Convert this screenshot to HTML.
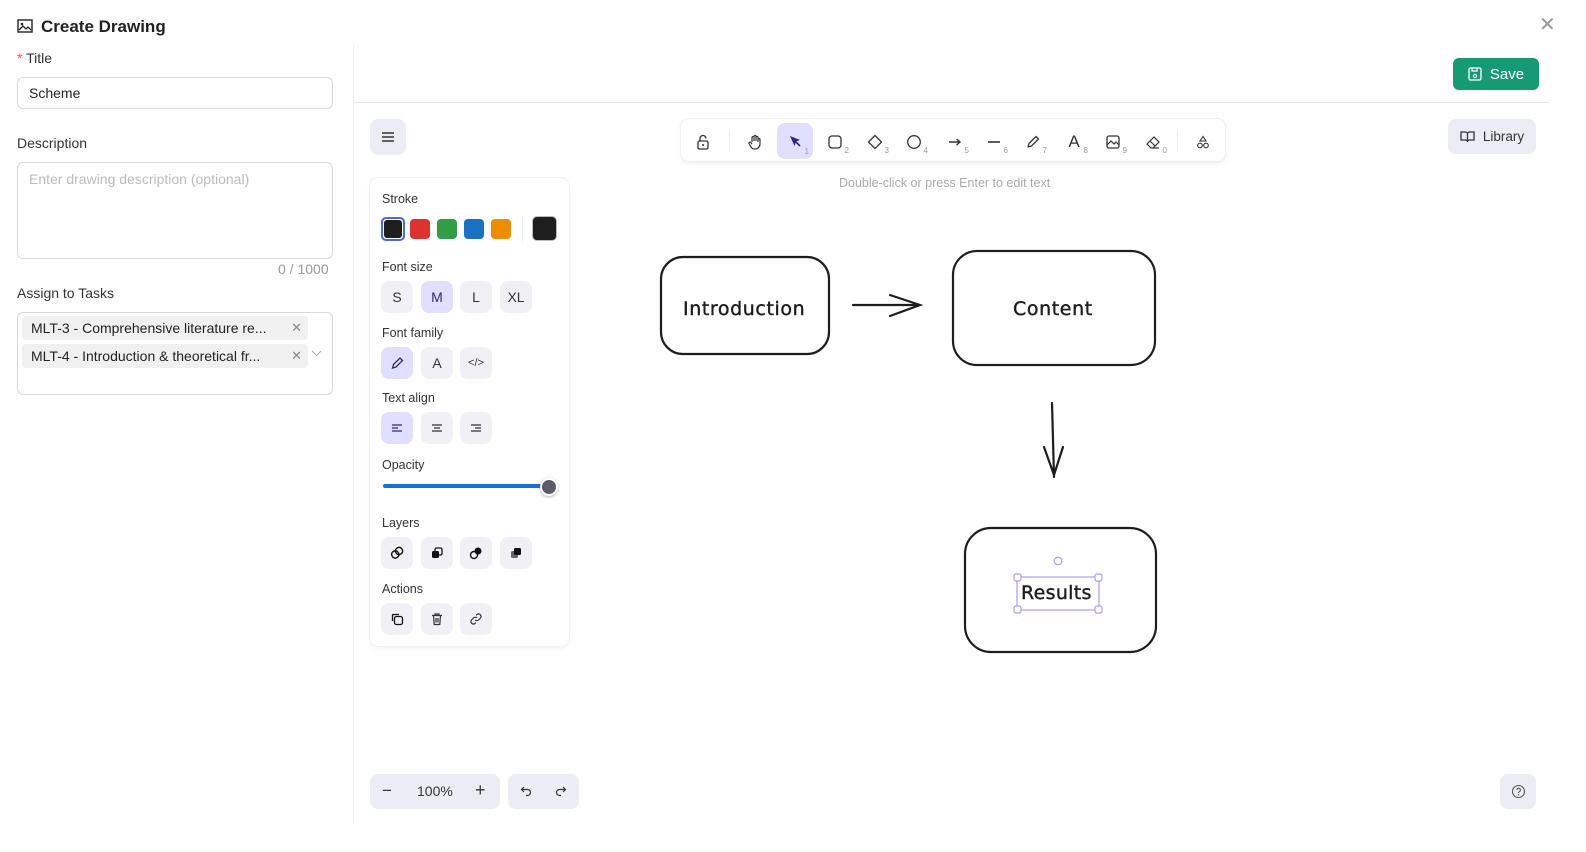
<!DOCTYPE html>
<html><head><meta charset="utf-8"><style>
*{box-sizing:border-box;margin:0;padding:0}
body{width:1586px;height:852px;background:#fff;font-family:"Liberation Sans",sans-serif;color:#222;position:relative;overflow:hidden}
.abs{position:absolute}
.lbl{font-size:14px;color:#333}
.inp{border:1px solid #d9d9d9;border-radius:6px;background:#fff}
.btn{position:absolute;width:32px;height:32px;border-radius:8px;background:#f1f0f6;display:flex;align-items:center;justify-content:center;font-size:14px;color:#333}
.btn.sel{background:#e0dfff;color:#2e2a7a}
.sw{position:absolute;top:219px;width:20px;height:20px;border-radius:4px}
.pl{font-size:12.5px;color:#333;position:absolute;left:382px}
.tb{position:absolute;top:126px;width:36px;height:32px;display:flex;align-items:center;justify-content:center}
.tb sub{font-size:8px;color:#999;position:absolute;right:4px;bottom:3px}
.tag{position:absolute;left:22px;height:24px;width:286px;background:#f0f0f0;border-radius:4px;font-size:14px;line-height:24px;padding-left:9px;color:#222}
.tag span{position:absolute;right:6px;color:#888;font-size:13px}
.hand{font-family:"DejaVu Sans",sans-serif;font-size:18px;color:#1e1e1e;position:absolute;letter-spacing:0.6px;-webkit-text-stroke:0.4px #1e1e1e}
</style></head><body>
<!-- header -->
<svg class="abs" style="left:17px;top:19px" width="16" height="14" viewBox="0 0 16 14"><rect x="1" y="1" width="14" height="12" fill="none" stroke="#222" stroke-width="1.4"/><circle cx="5" cy="5" r="1.3" fill="#222"/><path d="M2 11l4-4 3 3 2-2 3 3" fill="none" stroke="#222" stroke-width="1.3"/></svg>
<div class="abs" style="left:41px;top:17px;font-size:17px;font-weight:bold;color:#222">Create Drawing</div>
<div class="abs" style="left:1539px;top:12px;font-size:20px;color:#999">✕</div>
<!-- left panel -->
<div class="abs lbl" style="left:17px;top:50px"><span style="color:#ff4d4f">*</span> Title</div>
<div class="abs inp" style="left:17px;top:77px;width:316px;height:32px;padding:7px 11px;font-size:14px">Scheme</div>
<div class="abs lbl" style="left:17px;top:135px">Description</div>
<div class="abs inp" style="left:17px;top:162px;width:316px;height:97px;padding:8px 11px;font-size:14px;color:#bbb">Enter drawing description (optional)</div>
<div class="abs" style="left:278px;top:261px;font-size:14px;color:#999">0 / 1000</div>
<div class="abs lbl" style="left:17px;top:285px">Assign to Tasks</div>
<div class="abs inp" style="left:17px;top:312px;width:316px;height:83px"></div>
<div class="tag" style="top:316px">MLT-3 - Comprehensive literature re...<span>✕</span></div>
<div class="tag" style="top:344px">MLT-4 - Introduction &amp; theoretical fr...<span>✕</span></div>
<svg class="abs" style="left:311px;top:350px" width="11" height="7"><path d="M1 1l4.5 4.5L10 1" fill="none" stroke="#aaa"/></svg>
<div class="abs" style="left:353px;top:45px;width:1px;height:780px;background:#eee"></div>
<!-- top bar -->
<div class="abs" style="left:1453px;top:58px;width:86px;height:32px;background:#169a74;border-radius:6px;color:#fff;font-size:15px;display:flex;align-items:center;justify-content:center;gap:8px;box-shadow:0 2px 0 rgba(0,0,0,.05)"><svg width="14" height="14" viewBox="0 0 14 14"><rect x="1" y="1" width="12" height="12" rx="1.5" fill="none" stroke="#fff" stroke-width="1.3"/><path d="M4 1v3h5V1" fill="none" stroke="#fff" stroke-width="1.2"/><circle cx="7" cy="9" r="1.6" fill="none" stroke="#fff" stroke-width="1.2"/></svg>Save</div>
<div class="abs" style="left:354px;top:102px;width:1196px;height:1px;background:#e6e6e6"></div>
<!-- canvas controls -->
<div class="btn" style="left:370px;top:119px;width:36px;height:36px;background:#ececf4"><svg width="14" height="12"><path d="M1 2h12M1 6h12M1 10h12" stroke="#333" stroke-width="1.4"/></svg></div>
<div class="abs" style="left:1448px;top:119px;width:88px;height:35px;background:#ececf4;border-radius:8px;font-size:13.5px;color:#333;display:flex;align-items:center;justify-content:center;gap:8px"><svg width="15" height="13" viewBox="0 0 15 13"><path d="M1 2h4.5a2 2 0 012 2v8a2 2 0 00-2-2H1zM14 2H9.5a2 2 0 00-2 2v8a2 2 0 012-2H14z" fill="none" stroke="#333" stroke-width="1.3"/></svg>Library</div>
<!-- toolbar -->
<div class="abs" style="left:681px;top:119px;width:544px;height:42px;background:#fff;border-radius:8px;box-shadow:0 0 0 1px #f0f0f0,0 2px 6px rgba(0,0,0,.08)"></div>
<div class="tb" style="left:685px"><svg width="14" height="16"><rect x="2" y="7" width="10" height="8" rx="1.5" fill="none" stroke="#333" stroke-width="1.3"/><path d="M4 7V4.5a3 3 0 016 0" fill="none" stroke="#333" stroke-width="1.3"/><circle cx="7" cy="11" r="1" fill="#333"/></svg></div>
<div class="abs" style="left:729px;top:129px;width:1px;height:24px;background:#eee"></div>
<div class="tb" style="left:737px"><svg width="16" height="16" viewBox="0 0 16 16"><path d="M5 8V3.5a1 1 0 012 0V7M7 7V2.5a1 1 0 012 0V7M9 7V3.5a1 1 0 012 0V8M11 8V5.5a1 1 0 012 0V10a5 5 0 01-5 5H7.5A4 4 0 014 13L2 9.5a1 1 0 011.7-1L5 10" fill="none" stroke="#333" stroke-width="1.2"/></svg></div>
<div class="tb" style="left:777px;background:#e0dfff;border-radius:8px;height:36px;top:123px"><svg width="14" height="14"><path d="M2 2l10 4-4 1.5L6.5 12z" fill="#2e2a7a"/><path d="M7 7l5 5" stroke="#2e2a7a" stroke-width="1.6"/></svg><sub>1</sub></div>
<div class="tb" style="left:817px"><svg width="16" height="16"><rect x="2" y="2" width="12" height="12" rx="3" fill="none" stroke="#333" stroke-width="1.3"/></svg><sub>2</sub></div>
<div class="tb" style="left:857px"><svg width="16" height="16"><path d="M8 1.5L14.5 8 8 14.5 1.5 8z" fill="none" stroke="#333" stroke-width="1.3" stroke-linejoin="round"/></svg><sub>3</sub></div>
<div class="tb" style="left:896px"><svg width="16" height="16"><circle cx="8" cy="8" r="6.3" fill="none" stroke="#333" stroke-width="1.3"/></svg><sub>4</sub></div>
<div class="tb" style="left:937px"><svg width="16" height="16"><path d="M2 8h11M9.5 5L13 8l-3.5 3" fill="none" stroke="#333" stroke-width="1.4"/></svg><sub>5</sub></div>
<div class="tb" style="left:976px"><svg width="16" height="16"><path d="M2 8h12" stroke="#333" stroke-width="1.6"/></svg><sub>6</sub></div>
<div class="tb" style="left:1015px"><svg width="16" height="16"><path d="M3 13l1-3.5L11 2.5l2.5 2.5L6.5 12z" fill="none" stroke="#333" stroke-width="1.3" stroke-linejoin="round"/></svg><sub>7</sub></div>
<div class="tb" style="left:1056px;font-size:17px;color:#333">A<sub>8</sub></div>
<div class="tb" style="left:1095px"><svg width="16" height="16"><rect x="2" y="2" width="12" height="12" rx="2" fill="none" stroke="#333" stroke-width="1.3"/><path d="M2 11l4-4 3 3 2-2 3 3" fill="none" stroke="#333" stroke-width="1.2"/></svg><sub>9</sub></div>
<div class="tb" style="left:1135px"><svg width="16" height="16"><path d="M6 14L2 10l7-7 5 5-6 6zM5 7l5 5M6 14h8" fill="none" stroke="#333" stroke-width="1.2"/></svg><sub>0</sub></div>
<div class="abs" style="left:1177px;top:129px;width:1px;height:24px;background:#eee"></div>
<div class="tb" style="left:1185px"><svg width="14" height="14"><path d="M7 1.5L10 6H4z" fill="none" stroke="#333" stroke-width="1.1"/><circle cx="4" cy="10.5" r="2.3" fill="none" stroke="#333" stroke-width="1.1"/><circle cx="10" cy="10.5" r="2.3" fill="none" stroke="#333" stroke-width="1.1"/></svg></div>
<div class="abs" style="left:839px;top:176px;font-size:12.5px;color:#aaa">Double-click or press Enter to edit text</div>
<!-- properties panel -->
<div class="abs" style="left:370px;top:178px;width:199px;height:468px;background:#fff;border-radius:8px;box-shadow:0 0 0 1px #f2f2f2,0 2px 6px rgba(0,0,0,.06)"></div>
<div class="pl" style="top:192px">Stroke</div>
<div class="sw" style="left:381px;top:217px;width:24px;height:24px;border:2px solid #4a6bd0;border-radius:5px;padding:1px"><div style="width:100%;height:100%;background:#1e1e1e;border-radius:3px"></div></div>
<div class="sw" style="left:410px;background:#e03131"></div>
<div class="sw" style="left:437px;background:#2f9e44"></div>
<div class="sw" style="left:464px;background:#1971c2"></div>
<div class="sw" style="left:491px;background:#f08c00"></div>
<div class="abs" style="left:522px;top:216px;width:1px;height:26px;background:#eee"></div>
<div class="sw" style="left:532px;top:216px;width:25px;height:25px;background:#1e1e1e;border-radius:5px;border:1px solid #bbb"></div>
<div class="pl" style="top:260px">Font size</div>
<div class="btn" style="left:381px;top:281px">S</div>
<div class="btn sel" style="left:421px;top:281px">M</div>
<div class="btn" style="left:460px;top:281px">L</div>
<div class="btn" style="left:500px;top:281px">XL</div>
<div class="pl" style="top:326px">Font family</div>
<div class="btn sel" style="left:381px;top:347px"><svg width="14" height="14"><path d="M2.5 12l1-3.5 6.5-6.5 2.5 2.5-6.5 6.5z" fill="none" stroke="#2e2a7a" stroke-width="1.3"/></svg></div>
<div class="btn" style="left:421px;top:347px">A</div>
<div class="btn" style="left:460px;top:347px;font-size:11px">&lt;/&gt;</div>
<div class="pl" style="top:391px">Text align</div>
<div class="btn sel" style="left:381px;top:412px"><svg width="12" height="10"><path d="M1 2h10M1 5h6M1 8h10" stroke="#2e2a7a" stroke-width="1.3"/></svg></div>
<div class="btn" style="left:421px;top:412px"><svg width="12" height="10"><path d="M1 2h10M3 5h6M1 8h10" stroke="#333" stroke-width="1.3"/></svg></div>
<div class="btn" style="left:460px;top:412px"><svg width="12" height="10"><path d="M1 2h10M5 5h6M1 8h10" stroke="#333" stroke-width="1.3"/></svg></div>
<div class="pl" style="top:458px">Opacity</div>
<div class="abs" style="left:383px;top:484px;width:166px;height:4px;background:#1a6ddf;border-radius:2px"></div>
<div class="abs" style="left:540px;top:478px;width:18px;height:18px;border-radius:50%;background:#5b5b6b;border:2px solid #fff;box-shadow:0 1px 3px rgba(0,0,0,.3)"></div>
<div class="pl" style="top:516px">Layers</div>
<div class="btn" style="left:381px;top:537px"><svg width="14" height="14"><rect x="1.5" y="5" width="7" height="7" rx="3" fill="none" stroke="#111" stroke-width="1.4" transform="rotate(-30 5 8)"/><rect x="5.5" y="1.5" width="7" height="7" rx="3" fill="none" stroke="#111" stroke-width="1.4" transform="rotate(-30 9 5)"/></svg></div>
<div class="btn" style="left:421px;top:537px"><svg width="14" height="14"><rect x="5" y="2" width="7" height="7" rx="1.5" fill="none" stroke="#111" stroke-width="1.3"/><rect x="2" y="5" width="7" height="7" rx="1.5" fill="#111"/></svg></div>
<div class="btn" style="left:460px;top:537px"><svg width="14" height="14"><circle cx="5" cy="9" r="3.5" fill="none" stroke="#111" stroke-width="1.4"/><circle cx="9" cy="5" r="3.5" fill="#111"/></svg></div>
<div class="btn" style="left:500px;top:537px"><svg width="14" height="14"><rect x="2" y="5" width="7" height="7" rx="1.5" fill="#666"/><rect x="5" y="2" width="7" height="7" rx="1.5" fill="#111"/></svg></div>
<div class="pl" style="top:582px">Actions</div>
<div class="btn" style="left:381px;top:603px"><svg width="14" height="14"><rect x="4.5" y="4.5" width="8" height="8" rx="2" fill="none" stroke="#111" stroke-width="1.3"/><path d="M9 2.5H3.5a1 1 0 00-1 1V9" fill="none" stroke="#111" stroke-width="1.3"/></svg></div>
<div class="btn" style="left:421px;top:603px"><svg width="14" height="14"><path d="M2 3.5h10M5 3.5V2h4v1.5M3.5 3.5l.7 9h5.6l.7-9M6 6v4.5M8 6v4.5" fill="none" stroke="#333" stroke-width="1.2"/></svg></div>
<div class="btn" style="left:460px;top:603px"><svg width="14" height="14"><path d="M6 8a2.5 2.5 0 003.5 0l2-2a2.5 2.5 0 00-3.5-3.5l-.8.8M8 6a2.5 2.5 0 00-3.5 0l-2 2A2.5 2.5 0 006 11.5l.8-.8" fill="none" stroke="#333" stroke-width="1.2"/></svg></div>
<!-- drawing -->
<svg class="abs" style="left:0;top:0" width="1586" height="852">
<g fill="none" stroke="#1e1e1e" stroke-width="2.2" stroke-linecap="round">
<rect x="661" y="257" width="168" height="97" rx="22"/>
<rect x="953" y="251" width="202" height="114" rx="24"/>
<rect x="965" y="528" width="191" height="124" rx="26"/>
<path d="M853 305h67M890 295l30 10-30 11"/>
<path d="M1052 403l2 74M1044 447l10 28 9-28"/>
</g>
<g fill="#fff" stroke="#a5a0f0" stroke-width="1.2">
<rect x="1017" y="577" width="82" height="33" fill="none"/>
<rect x="1014" y="574" width="7" height="7" rx="2"/><rect x="1095" y="574" width="7" height="7" rx="2"/>
<rect x="1014" y="606" width="7" height="7" rx="2"/><rect x="1095" y="606" width="7" height="7" rx="2"/>
<circle cx="1058" cy="561" r="3.8"/>
</g>
</svg>
<div class="hand" style="left:683px;top:298px;font-size:19px">Introduction</div>
<div class="hand" style="left:1013px;top:298px;font-size:19px">Content</div>
<div class="hand" style="left:1021px;top:582px;font-size:19px;letter-spacing:0.3px">Results</div>
<!-- bottom -->
<div class="abs" style="left:370px;top:774px;width:130px;height:35px;background:#ececf4;border-radius:8px;font-size:14px;color:#333"><span class="abs" style="left:12px;top:7px;font-size:17px">−</span><span class="abs" style="left:47px;top:9px">100%</span><span class="abs" style="left:105px;top:6px;font-size:18px">+</span></div>
<div class="abs" style="left:508px;top:774px;width:71px;height:35px;background:#ececf4;border-radius:8px"><svg class="abs" style="left:12px;top:11px" width="12" height="12"><path d="M4 2L1.5 4.5 4 7M1.5 4.5h6a3 3 0 010 6H6" fill="none" stroke="#333" stroke-width="1.2"/></svg><svg class="abs" style="left:47px;top:11px" width="12" height="12"><path d="M8 2l2.5 2.5L8 7M10.5 4.5h-6a3 3 0 000 6H6" fill="none" stroke="#333" stroke-width="1.2"/></svg></div>
<div class="abs" style="left:1500px;top:774px;width:36px;height:35px;background:#ececf4;border-radius:8px"><svg class="abs" style="left:11px;top:10px" width="15" height="15"><circle cx="7.5" cy="7.5" r="6" fill="none" stroke="#555" stroke-width="1.1"/><path d="M5.8 6a1.8 1.8 0 113 1.3c-.7.4-1.3.8-1.3 1.7" fill="none" stroke="#555" stroke-width="1.1"/><circle cx="7.5" cy="10.8" r=".7" fill="#555"/></svg></div>
</body></html>
